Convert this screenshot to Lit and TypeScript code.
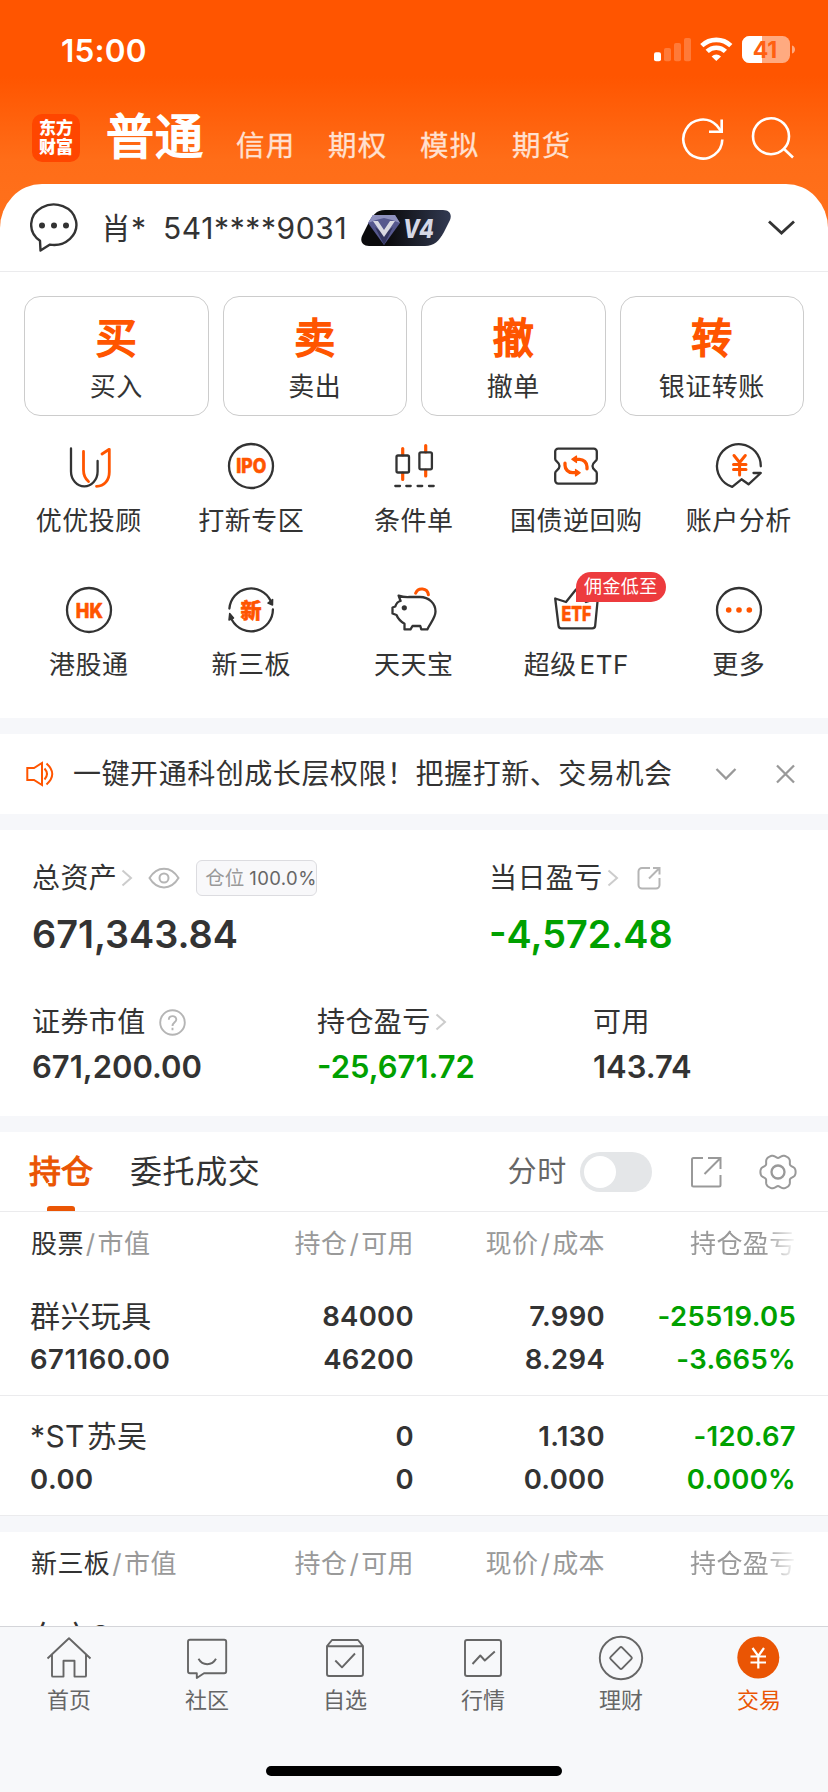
import { LitElement, html, css, svg } from "lit";
import { customElement, property } from "lit/decorators.js";
import { classMap } from "lit/directives/class-map.js";

const INK = "#333";
const ACCENT = "#ff5500";

/* Six-lobed cog outline around (20, 20). */
const cogPath = (() => {
  const points: string[] = [];
  for (let i = 0; i < 120; i++) {
    const t = (i / 120) * Math.PI * 2;
    const r = 16.2 + 1.8 * Math.cos(6 * t) - 0.4 * Math.cos(12 * t);
    points.push(`${(20 + r * Math.cos(t)).toFixed(2)} ${(20 + r * Math.sin(t)).toFixed(2)}`);
  }
  return `M${points.join("L")}Z`;
})();

const serviceIcons: Record<string, unknown> = {
  advisor: svg`
    <path d="M6 6.5V29.5A13.3 14.8 0 0 0 32.6 29.5V19" stroke=${INK}/>
    <path d="M18.5 9.5V28C18.5 33 20 36.500 23.500 39.500" stroke=${ACCENT} stroke-width="2.800"/>
    <path d="M31.500 44.300C39.500 44.300 44.300 38 44.300 30V7.300L37 12" stroke=${ACCENT} stroke-width="2.800"/>`,
  ipo: svg`
    <circle cx="24" cy="24" r="22" stroke=${INK}/>
    <text x="24.200" y="31.300" class="t" font-size="20" textLength="30" lengthAdjust="spacingAndGlyphs">IPO</text>`,
  condition: svg`
    <path d="M12.700 6.500V13M12.700 31V37.500M35.700 3.500V10M35.700 28V34" stroke=${ACCENT} stroke-width="3.200"/>
    <rect x="6.500" y="13.500" width="12.500" height="17" rx="1.500" stroke=${INK}/>
    <rect x="29.400" y="10.300" width="12.500" height="17" rx="1.500" stroke=${INK}/>
    <path d="M5.300 44H10M16.300 44H20.700M27.600 44H32.200M39 44H43.700" stroke=${INK}/>`,
  repo: svg`
    <path d="M3.200 9.600a3 3 0 0 1 3-3H41.800a3 3 0 0 1 3 3V17c0 2.500-4.300 3-4.300 7s4.300 4.500 4.300 7V38.600a3 3 0 0 1-3 3H6.200a3 3 0 0 1-3-3V31c0-2.500 4.300-3 4.300-7s-4.300-4.500-4.300-7Z" stroke=${INK}/>
    <path d="M23 17.300h4.500a7.500 7.500 0 0 1 7.500 7.500v2M25 30.700h-4.500a7.500 7.500 0 0 1-7.500-7.500v-2" stroke=${ACCENT} stroke-width="3.300"/>
    <path d="M24.500 14V20.600L19.800 17.300ZM23.500 27.400V34L28.200 30.700Z" fill=${ACCENT} stroke=${ACCENT} stroke-width="1.200"/>`,
  analysis: svg`
    <path d="M45.800 24.300A21.900 21.900 0 1 0 17.200 44.900L26.500 37.300L33.500 42.300L45.800 31H38.500" stroke=${INK}/>
    <path d="M19 13.500L24.600 20.500L30.300 13.500M18.500 22.500H31M18.500 27.600H31M24.600 21V33" stroke=${ACCENT} stroke-width="3"/>`,
  hk: svg`
    <circle cx="24" cy="24" r="22" stroke=${INK}/>
    <text x="24.300" y="31.500" class="t" font-size="20.500" textLength="27" lengthAdjust="spacingAndGlyphs">HK</text>`,
  neeq: svg`
    <path d="M2.400 22.500A21.700 21.700 0 0 1 43.500 14.500M45.900 23.500A21.800 21.800 0 0 1 5 34" stroke=${INK}/>
    <path d="M45.600 13.500L41 17L45.500 19ZM2.700 27.500L6.500 32L2 34Z" fill=${INK} stroke=${INK} stroke-width="1.500"/>
    <text x="24" y="31.500" class="t" font-size="21">新</text>`,
  piggy: svg`
    <path d="M8.600 9.600C13 11.200 16 11.200 19.500 11H30C39 11 45.500 17.500 45.500 25.500C45.500 32 40 37.500 37.300 43.400H31.300L30.300 40H22.500L20.500 43.400H14.500V37.800C10.500 35.300 7.500 31.500 6.500 29L2.500 27.500V21.500L5.300 20.500C6 18 8.300 15.500 10.600 15Z" stroke=${INK}/>
    <circle cx="14.300" cy="21.800" r="2.600" fill=${INK}/>
    <path d="M25.600 7.200C28 1 37.500 1.500 38.400 8.800" stroke=${ACCENT} stroke-width="3"/>`,
  etf: svg`
    <path d="M3.200 12.500L14 16L24 3.500L34 16L45.800 12.500L43.200 39.500a3 3 0 0 1-3 2.900H9.500a3 3 0 0 1-3-2.900Z" stroke=${INK}/>
    <text x="24.500" y="35.400" class="t" font-size="20.500" textLength="30" lengthAdjust="spacingAndGlyphs">ETF</text>`,
  more: svg`
    <circle cx="24" cy="24" r="22" stroke=${INK}/>
    <g fill=${ACCENT}><circle cx="13.700" cy="24" r="2.800"/><circle cx="24" cy="24" r="2.800"/><circle cx="34.300" cy="24" r="2.800"/></g>`,
};

const navIcons: Record<string, unknown> = {
  home: svg`<path d="M2.500 25.500L24 5.300L45.500 25.500M7 21.500V42.700Q7 43.600 8 43.600H18.500V27.700H29.500V43.600H40Q41 43.600 41 42.700V21.500"/>`,
  community: svg`<path d="M7 6.700H41.200a2 2 0 0 1 2 2V38.200a2 2 0 0 1-2 2H21L13.800 45V40.200H7a2 2 0 0 1-2-2V8.700a2 2 0 0 1 2-2ZM15.500 25.800C19.500 33 29 33 33 25.800"/>`,
  watchlist: svg`<path d="M6 13.200L11 7H37L42 13.200ZM6 13.200V41a2 2 0 0 0 2 2H40a2 2 0 0 0 2-2V13.200M14.300 27.500L21 34.300L34 20.500"/>`,
  market: svg`<rect x="6" y="7" width="36" height="36" rx="2"/><path d="M13.500 31L21.300 22.500L25.800 27.500L35.800 18.500"/>`,
  wealth: svg`<circle cx="24" cy="25" r="21.200"/><path d="M22.800 14.700a1.700 1.700 0 0 1 2.400 0L34.300 23.800a1.700 1.700 0 0 1 0 2.400L25.200 35.300a1.700 1.700 0 0 1-2.400 0L13.700 26.200a1.700 1.700 0 0 1 0-2.400Z"/>`,
  trade: svg`<circle cx="23.300" cy="24.500" r="21" fill="#ea5504" stroke="none"/><path d="M17.500 15L23.300 23L29 15M15.500 23.500H31M15.500 29.500H31M23.300 23V35.500" stroke="#fff" stroke-width="2.200"/>`,
};

const chevron = html`<svg class="chev" width="12" height="18" viewBox="0 0 12 18" fill="none" stroke="#ccc" stroke-width="2"><path d="M1.500 1.500L10 9L1.500 16.500"/></svg>`;

@customElement("service-item")
class ServiceItem extends LitElement {
  @property() icon = "";
  @property() label = "";
  @property() badge = "";
  static styles = css`
    :host { display: flex; flex-direction: column; align-items: center; gap: 14px; position: relative; }
    svg { display: block; overflow: visible; }
    .t { font-family: Inter, "Noto Sans CJK SC", sans-serif; font-weight: 800; fill: #ff5500; stroke: #ff5500; stroke-width: 0.6px; text-anchor: middle; }
    .label { font-size: 26px; line-height: 34px; letter-spacing: 0.5px; word-spacing: -5px; white-space: nowrap; }
    .badge { position: absolute; left: 81px; top: -14px; width: 90px; height: 30px; box-sizing: border-box; padding-left: 8px; border-radius: 15px 15px 15px 0; background: #ed3b3e; color: #fff; font-size: 18px; line-height: 29px; letter-spacing: 0.4px; white-space: nowrap; }
  `;
  render() {
    return html`
      <svg width="48" height="48" viewBox="0 0 48 48" fill="none" stroke-width="2.300" stroke-linecap="round" stroke-linejoin="round">${serviceIcons[this.icon]}</svg>
      <div class="label">${this.label}</div>
      ${this.badge ? html`<div class="badge">${this.badge}</div>` : ""}`;
  }
}

@customElement("holding-table")
class HoldingTable extends LitElement {
  @property() heading = "";
  @property({ attribute: false }) rows: string[][] = [];
  static styles = css`
    :host { display: block; background: #fff; }
    .row { display: grid; grid-template-columns: 201px 182px 191px 191px; padding-left: 31px; }
    .head { font-size: 26px; line-height: 64px; color: #999; letter-spacing: 0.4px; }
    .head b { font-weight: 400; color: #333; }
    .head i { font-style: normal; padding: 0 2px; }
    .r { text-align: right; }
    .fade { justify-self: end; width: 106px; white-space: nowrap; -webkit-mask-image: linear-gradient(90deg, #000 70%, transparent 102%); mask-image: linear-gradient(90deg, #000 70%, transparent 102%); }
    .item { box-sizing: border-box; height: 120px; padding-top: 18.500px; border-bottom: 1px solid #ebebed; font-size: 27.500px; line-height: 43px; font-weight: 600; letter-spacing: 0.3px; }
    .left { margin-left: -1px; letter-spacing: 0.5px; }
    .name { font-size: 30px; font-weight: 400; letter-spacing: 0.4px; word-spacing: -7px; }
    .down { color: #00a000; }
  `;
  render() {
    return html`
      <div class="row head">
        <div><b>${this.heading}</b><i>/</i>市值</div>
        <div class="r">持仓<i>/</i>可用</div>
        <div class="r">现价<i>/</i>成本</div>
        <div class="fade">持仓盈亏</div>
      </div>
      ${this.rows.map(
        (r) => html`<div class="row item">
          <div class="left"><div class="name">${r[0]}</div>${r[1]}</div>
          <div class="r">${r[2]}<br />${r[3]}</div>
          <div class="r">${r[4]}<br />${r[5]}</div>
          <div class="r down">${r[6]}<br />${r[7]}</div>
        </div>`
      )}`;
  }
}

@customElement("app-root")
class AppRoot extends LitElement {
  static styles = css`
    :host { display: flex; flex-direction: column; width: 828px; height: 1792px; overflow: hidden; background: #fff; color: #333; font-family: Inter, "Noto Sans CJK SC", sans-serif; }
    svg { display: block; flex: none; }
    .main { flex: 1; min-height: 0; overflow: hidden; }
    .top { height: 228px; margin-bottom: -44px; background: linear-gradient(#ff5500 0 76px, #ff6d18 160px, #ff711c 228px); color: #fff; }
    .status { display: flex; align-items: center; height: 100px; box-sizing: border-box; padding: 0 33px 0 61px; }
    .clock { flex: 1; font-size: 31.500px; font-weight: 600; letter-spacing: 0.2px; }
    .header { display: flex; align-items: center; height: 76px; padding: 0 33px 0 32px; }
    .logo { width: 48px; height: 48px; border-radius: 10px; background: #ff4600; font-size: 17px; line-height: 19px; font-weight: 800; box-sizing: border-box; padding: 5px 0 0 7px; white-space: pre; }
    .active { margin-left: 26px; font-size: 48px; font-weight: 400; -webkit-text-stroke: 1.9px #fff; line-height: 60px; width: 130px; letter-spacing: 1px; white-space: nowrap; margin-top: -3px; }
    .tab { width: 92px; font-size: 28.500px; line-height: 40px; letter-spacing: 1.2px; color: #ffe0d0; -webkit-text-stroke: 0.3px #ffe0d0; margin-top: 16px; white-space: nowrap; }
    .grow { flex: 1; }
    .card { position: relative; background: #fff; border-radius: 42px 42px 0 0 / 44px 44px 0 0; }
    .account { display: flex; align-items: center; height: 87px; border-bottom: 1px solid #ebebed; padding: 0 33px 0 30px; font-size: 30px; line-height: 40px; }
    .owner { margin-left: 22px; width: 62px; white-space: nowrap; }
    .number { width: 198px; letter-spacing: 0.6px; }
    .v4 { font-weight: 800; font-style: italic; fill: #d5d8e6; }
    .trade { display: grid; grid-template-columns: repeat(4, 1fr); gap: 14px; padding: 24px 24px 26px; }
    .btn { box-sizing: border-box; height: 120px; border: 1px solid #ccc; border-radius: 16px; text-align: center; padding-top: 15px; }
    .big { font-size: 41px; line-height: 52px; font-weight: 400; -webkit-text-stroke: 1.9px #ff5500; color: #ff5500; }
    .small { font-size: 26px; line-height: 34px; letter-spacing: 0.5px; margin-top: 6px; }
    .services { display: grid; grid-template-columns: repeat(5, 162.500px); row-gap: 48px; padding: 0 7.500px 36px; }
    .band { height: 16px; background: #f6f7fa; }
    .notice { display: flex; align-items: center; height: 80px; padding: 0 33px 0 26px; font-size: 28px; line-height: 40px; letter-spacing: 0.55px; }
    .notice .msg { margin-left: 18px; flex: 1; white-space: nowrap; }
    .assets { padding: 30px 0 30px 32px; }
    .two { display: grid; grid-template-columns: 457px 1fr; }
    .three { display: grid; grid-template-columns: 285px 276px 1fr; margin-top: 48px; }
    .lab { display: flex; align-items: center; height: 36px; font-size: 28px; line-height: 36px; letter-spacing: 0.4px; white-space: nowrap; }
    .lab .chev { margin-left: 4px; }
    .eye { margin-left: 15px; }
    .share { margin-left: 18px; }
    .help { margin-left: 13px; }
    .cog { margin-left: 36px; }
    .tag { margin-left: 16px; box-sizing: border-box; width: 121px; height: 36px; border: 1px solid #dcdce0; border-radius: 6px; background: #f8f8fa; padding-left: 8px; font-size: 19.500px; line-height: 35px; color: #999; display: flex; gap: 5px; letter-spacing: 0; }
    .tag b { font-weight: 400; color: #666; font-size: 18.500px; letter-spacing: 0.4px; }
    .sum { margin-top: 16px; font-size: 37.800px; line-height: 44px; font-weight: 600; }
    .val { margin-top: 8px; font-size: 31px; line-height: 38px; font-weight: 600; }
    .down { color: #00a000; }
    .tabs { display: flex; align-items: center; height: 79px; border-bottom: 1px solid #ebebed; padding: 0 30px; font-size: 32px; line-height: 40px; }
    .on { color: #ea5504; -webkit-text-stroke: 1.1px #ea5504; width: 101px; height: 79px; line-height: 80px; position: relative; white-space: nowrap; margin-left: -1px; }
    .on::after { content: ""; position: absolute; left: 18px; bottom: 0; width: 28px; height: 5px; border-radius: 3px 3px 0 0; background: #ea5504; }
    .orders { letter-spacing: 0.6px; }
    .intraday { font-size: 29px; letter-spacing: 0.8px; color: #666; margin-right: 13px; }
    .toggle { box-sizing: border-box; width: 72px; height: 40px; border-radius: 20px; background: #e4e6e8; padding: 4px; margin-right: 38px; }
    .knob { width: 32px; height: 32px; border-radius: 50%; background: #fff; }
    .nav { box-sizing: border-box; height: 166px; border-top: 1px solid #d4d5d9; background: #f7f8fa; display: flex; flex-direction: column; align-items: center; justify-content: space-between; padding-bottom: 16px; }
    .items { display: grid; grid-template-columns: repeat(6, 138px); padding-top: 6px; }
    .nav-item { display: flex; flex-direction: column; align-items: center; font-size: 22px; line-height: 28px; color: #666; gap: 5px; }
    .nav-item.current { color: #ea5504; }
    .home-bar { width: 296px; height: 10px; border-radius: 5px; background: #000; }
  `;

  render() {
    const actions = [["买", "买入"], ["卖", "卖出"], ["撤", "撤单"], ["转", "银证转账"]];
    const services = [
      ["advisor", "优优投顾"], ["ipo", "打新专区"], ["condition", "条件单"], ["repo", "国债逆回购"], ["analysis", "账户分析"],
      ["hk", "港股通"], ["neeq", "新三板"], ["piggy", "天天宝"], ["etf", "超级 ETF", "佣金低至"], ["more", "更多"],
    ];
    const nav = [["home", "首页"], ["community", "社区"], ["watchlist", "自选"], ["market", "行情"], ["wealth", "理财"], ["trade", "交易"]];
    const stocks = [
      ["群兴玩具", "671160.00", "84000", "46200", "7.990", "8.294", "-25519.05", "-3.665%"],
      ["*ST 苏吴", "0.00", "0", "0", "1.130", "0.000", "-120.67", "0.000%"],
    ];
    const neeq = [["东方S", "0.00", "0", "0", "0.000", "0.000", "0.00", "0.000%"]];
    return html`
      <div class="main">
        <div class="top">
          <div class="status">
            <div class="clock">15:00</div>
            <svg width="142" height="28" viewBox="0 0 142 28">
              <rect x="1" y="16.300" width="7" height="9" rx="2" fill="#fff"/>
              <g fill="#fff" opacity=".22"><rect x="11" y="12" width="7" height="13.300" rx="2"/><rect x="21" y="7" width="7" height="18.300" rx="2"/><rect x="31" y="2" width="7" height="23.300" rx="2"/></g>
              <g fill="none" stroke="#fff" stroke-width="4.600"><path d="M48.800 9.700A21 21 0 0 1 77.800 9.700"/><path d="M54.200 15.400A13 13 0 0 1 72.400 15.400"/></g>
              <path d="M58.600 20.500A6.800 6.800 0 0 1 68 20.500L63.300 25Z" fill="#fff"/>
              <rect x="89" y="0" width="48" height="27" rx="7.500" fill="#fff" opacity=".5"/>
              <path d="M96.500 0H109V27H96.500A7.500 7.500 0 0 1 89 19.500V7.500A7.500 7.500 0 0 1 96.500 0Z" fill="#fff"/>
              <path d="M139 9.500C143 10.500 143 16.500 139 17.500Z" fill="#fff" opacity=".5"/>
              <text x="112" y="22" text-anchor="middle" font-size="23" font-weight="700" fill="#ff6010">41</text>
            </svg>
          </div>
          <div class="header">
            <div class="logo">东方
财富</div>
            <div class="active">普通</div>
            <div class="tab">信用</div><div class="tab">期权</div><div class="tab">模拟</div><div class="tab">期货</div>
            <div class="grow"></div>
            <svg width="116" height="46" viewBox="0 0 116 46" fill="none" stroke="#fff" stroke-width="2.600">
              <path d="M43.300 24.500A19.500 19.500 0 1 1 37.500 10.200L42 16"/><path d="M42.700 4.500V16.700H30"/>
              <circle cx="92" cy="21.200" r="18"/><path d="M104.500 33.500L114 42.500"/>
            </svg>
          </div>
        </div>
        <div class="card">
          <div class="account">
            <svg width="49" height="50" viewBox="0 0 49 50" fill="none" stroke="#333" stroke-width="2.400" stroke-linejoin="round"><path d="M10 37.700A22.600 20.200 0 1 1 20 41.600L10.500 47.500Z"/><g fill="#333" stroke="none"><circle cx="12" cy="22.500" r="3"/><circle cx="24" cy="22.500" r="3"/><circle cx="36" cy="22.500" r="3"/></g></svg>
            <div class="owner">肖*</div>
            <div class="number">541****9031</div>
            <svg width="90" height="36" viewBox="0 0 90 36">
              <defs><linearGradient id="bg"><stop offset=".3" stop-color="#0b0b0d"/><stop offset="1" stop-color="#323a52"/></linearGradient></defs>
              <path d="M24 0H82C89 0 91 5 89 10L83 22C78 31 73 36 64 36H8C1 36-1 31 1 26L7 14C12 5 15 0 24 0Z" fill="url(#bg)"/>
              <path d="M12 5H34L39 13L23 35L7 13Z" fill="#56588e"/><path d="M12 5H34L39 13L31 10L23 8L15 10L7 13Z" fill="#8f91be"/><path d="M23 35L14 17L23 24L32 17Z" fill="#33355f"/>
              <path d="M12 11L23 27L34 11H29L23 20L17 11Z" fill="#d9d9e2"/>
              <text x="57.500" y="28" class="v4" text-anchor="middle" font-size="26" textLength="31" lengthAdjust="spacingAndGlyphs">V4</text>
            </svg>
            <div class="grow"></div>
            <svg width="28" height="18" viewBox="0 0 28 18" fill="none" stroke="#333" stroke-width="2.800"><path d="M2 2.500L14.500 14L27 2.500"/></svg>
          </div>
          <div class="trade">${actions.map(([a, b]) => html`<div class="btn"><div class="big">${a}</div><div class="small">${b}</div></div>`)}</div>
          <div class="services">${services.map(([i, l, b]) => html`<service-item icon=${i} label=${l} badge=${b ?? ""}></service-item>`)}</div>
        </div>
        <div class="band"></div>
        <div class="notice">
          <svg width="29" height="26" viewBox="0 0 29 26" fill="none" stroke="#ff5500" stroke-width="2"><path d="M1.300 7H8L16 2V24L8 19H1.300Z"/><path d="M18.500 7.500Q23.500 13 18.500 18.500M20.500 2.500Q32 13 20.500 23.500"/></svg>
          <div class="msg">一键开通科创成长层权限！把握打新、交易机会</div>
          <svg width="80" height="22" viewBox="0 0 80 22" fill="none" stroke="#999" stroke-width="2.300"><path d="M1.500 6L11 15.500L20.500 6M62 2.500L79 19.500M79 2.500L62 19.500"/></svg>
        </div>
        <div class="band"></div>
        <div class="assets">
          <div class="two">
            <div>
              <div class="lab">总资产${chevron}
                <svg class="eye" width="32" height="22" viewBox="0 0 32 22" fill="none" stroke="#b5b5b5" stroke-width="2"><path d="M1.500 11C9-1.500 23-1.500 30.500 11C23 23.500 9 23.500 1.500 11Z"/><circle cx="16" cy="11" r="4.500"/></svg>
                <div class="tag">仓位<b>100.0%</b></div>
              </div>
              <div class="sum">671,343.84</div>
            </div>
            <div>
              <div class="lab">当日盈亏${chevron}
                <svg class="share" width="24" height="24" viewBox="0 0 24 24" fill="none" stroke="#b5b5b5" stroke-width="2"><path d="M13 2H5a3.500 3.500 0 0 0-3.500 3.500V19A3.500 3.500 0 0 0 5 22.500H19A3.500 3.500 0 0 0 22.500 19V12M16 2H22.500V8.500M22.500 2L12 12.500"/></svg>
              </div>
              <div class="sum down">-4,572.48</div>
            </div>
          </div>
          <div class="three">
            <div>
              <div class="lab">证券市值
                <svg class="help" width="27" height="27" viewBox="0 0 27 27" fill="none" stroke="#b5b5b5" stroke-width="1.900"><circle cx="13.500" cy="13.500" r="12.300"/><path d="M9.800 10.800C9.800 6 17.300 6 17.300 10.500C17.300 13.200 13.500 13.500 13.500 17M13.500 18.800V21.200"/></svg>
              </div>
              <div class="val">671,200.00</div>
            </div>
            <div><div class="lab">持仓盈亏${chevron}</div><div class="val down">-25,671.72</div></div>
            <div><div class="lab">可用</div><div class="val">143.74</div></div>
          </div>
        </div>
        <div class="band"></div>
        <div class="tabs">
          <div class="on">持仓</div>
          <div class="orders">委托成交</div>
          <div class="grow"></div>
          <div class="intraday">分时</div>
          <div class="toggle"><div class="knob"></div></div>
          <svg width="32" height="32" viewBox="0 0 32 32" fill="none" stroke="#999" stroke-width="2"><path d="M13 2H3.500A1.500 1.500 0 0 0 2 3.500V29A1.500 1.500 0 0 0 3.500 30.500H29A1.500 1.500 0 0 0 30.500 29V19M18 2H30.500V13M30.500 2L14.500 18"/></svg>
          <svg class="cog" width="40" height="40" viewBox="0 0 40 40" fill="none" stroke="#999" stroke-width="2"><path d=${cogPath}/><circle cx="20" cy="20" r="6.500" stroke-width="2.300"/></svg>
        </div>
        <holding-table heading="股票" .rows=${stocks}></holding-table>
        <div class="band"></div>
        <holding-table heading="新三板" .rows=${neeq}></holding-table>
      </div>
      <div class="nav">
        <div class="items">
          ${nav.map(([i, l]) => html`<div class=${classMap({ "nav-item": true, current: i === "trade" })}>
            <svg width="48" height="48" viewBox="0 0 48 48" fill="none" stroke="#666" stroke-width="1.900" stroke-linejoin="round">${navIcons[i]}</svg>${l}</div>`)}
        </div>
        <div class="home-bar"></div>
      </div>`;
  }
}
